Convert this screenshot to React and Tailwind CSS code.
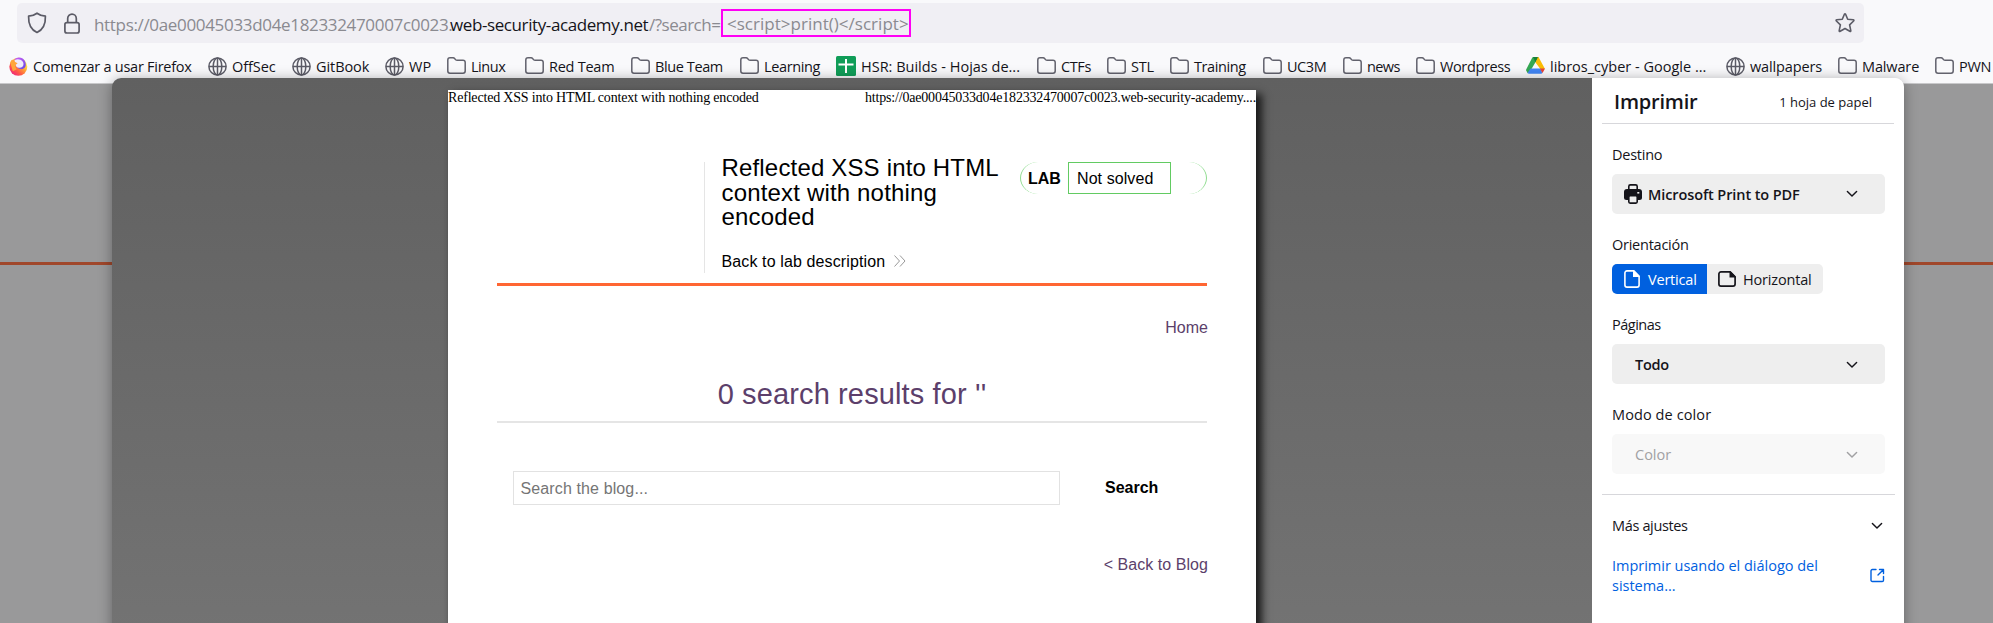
function Shield() {
  return (
    <svg width="20" height="22" viewBox="0 0 20 22" fill="none" stroke="#5b5b66" strokeWidth="1.7" strokeLinejoin="round">
      <path d="M10 1.2C7.6 3 4.6 4 1.6 4.2 1.3 11.500 3.200 17.200 10 20.500c6.800-3.300 8.700-9 8.400-16.300C15.400 4 12.400 3 10 1.200z" />
    </svg>
  );
}

function Lock() {
  return (
    <svg width="16" height="21" viewBox="0 0 16 21" fill="none" stroke="#5b5b66" strokeWidth="1.7">
      <rect x="0.9" y="9.6" width="14.2" height="10.400" rx="2" />
      <path d="M3.700 9.500V5.400a4.300 4.300 0 0 1 8.600 0v4.100" />
    </svg>
  );
}

function Star() {
  return (
    <svg width="20" height="20" viewBox="0 0 20 20" fill="none" stroke="#5b5b66" strokeWidth="1.6" strokeLinejoin="round">
      <path d="M9.400 1.300Q10 .5 10.600 1.300L12.700 6.300l5.500.5q1.200.2.4 1.200l-4 3.900 1.200 5.700q.1 1.200-1 .7L10 15.500l-4.800 2.800q-1.100.5-1-.7l1.200-5.700-4-3.900q-.8-1 .4-1.200l5.500-.5z" />
    </svg>
  );
}

function Folder() {
  return (
    <svg className="-mt-0.5" width="19" height="17" viewBox="0 0 19 17" fill="none" stroke="#62626d" strokeWidth="1.5" strokeLinejoin="round">
      <path d="M.8 3A2.200 2.200 0 0 1 3 .8h3.100c.7 0 1.100.2 1.500.7l1.100 1.200c.4.4.8.600 1.400.6H16a2.200 2.200 0 0 1 2.200 2.200V14A2.200 2.200 0 0 1 16 16.200H3A2.200 2.200 0 0 1 .8 14z" />
    </svg>
  );
}

function Globe() {
  return (
    <svg width="19" height="19" viewBox="0 0 19 19" fill="none" stroke="#5b5b66" strokeWidth="1.5">
      <circle cx="9.500" cy="9.500" r="8.600" />
      <ellipse cx="9.500" cy="9.500" rx="4.300" ry="8.600" />
      <path d="M9.500 1v17M1 9.500h17" />
    </svg>
  );
}

function Sheet() {
  return (
    <svg width="20" height="20" viewBox="0 0 20 20">
      <rect width="20" height="20" rx="1.500" fill="#109d58" />
      <path d="M10 3v14M2.500 8.500h15" stroke="#fff" strokeWidth="2" />
    </svg>
  );
}

function Drive() {
  return (
    <svg className="-mt-0.5" width="19" height="17" viewBox="0 0 19 17">
      <path d="M6.300.6Q6.700 0 7.400 0h1.900v5.500L4.600 13.600 1.700 16.300.3 13.800q-.5-.8 0-1.600z" fill="#34a853" />
      <path d="M7 0h4.600q.7 0 1.100.6L9.500 5.600z" fill="#188038" />
      <path d="M12 0q.6.1.9.8l5.600 10.200q.4.600.2 1h-4.300L9.500 5.600z" fill="#fbbc04" />
      <path d="M4.600 11.500h9.800L16.500 16q-.6.8-1.500.8H3q-1 0-1.500-.8z" fill="#4285f4" />
      <path d="M13.800 11.500h5q-.1.800-.4 1.300l-1.900 3.300z" fill="#ea4335" />
    </svg>
  );
}

function Firefox() {
  return (
    <svg width="19" height="19" viewBox="0 0 19 19">
      <defs>
        <linearGradient id="fire" x1="0.850" y1="0.100" x2="0.150" y2="0.900">
          <stop offset="0.100" stopColor="#fff44f" />
          <stop offset="0.400" stopColor="#ffa436" />
          <stop offset="0.700" stopColor="#ff5a45" />
          <stop offset="1" stopColor="#f0267c" />
        </linearGradient>
        <linearGradient id="globe" x1="0.200" y1="0" x2="0.800" y2="1">
          <stop offset="0" stopColor="#c35bf5" />
          <stop offset="1" stopColor="#6a4be8" />
        </linearGradient>
      </defs>
      <circle cx="9.300" cy="9.800" r="9" fill="url(#fire)" />
      <path d="M5.500 2.200Q7.500.3 10.500.6c4 .4 6.500 3.600 6.300 7.400-.2 2.800-2.500 4.400-4.800 4.100-3-.3-4.500-1.600-4.300-3.800z" fill="url(#globe)" />
      <path d="M5.500 3.200Q8.500 1.600 11.500 2.800c2.300 1 3.400 3 2.900 5.200-.5 1.900-2.200 2.900-3.900 2.700C8 10.900 6.700 9.400 6.600 7.500z" fill="#efeafc" />
      <path d="M1.200 5.200Q2 3.600 3.300 2.600q.2 1.500 1.700 2.200Q7 5 8.600 6.600L6.300 8q-.8 2.600 1.500 4.200l-4 2z" fill="#ffa63a" />
    </svg>
  );
}

function Chevron({ className }) {
  return (
    <svg className={className} width="12" height="8" viewBox="0 0 12 8" fill="none" stroke="currentColor" strokeWidth="1.450" strokeLinecap="round" strokeLinejoin="round">
      <path d="M1.400 1.400 6 6l4.600-4.600" />
    </svg>
  );
}

const icons = { folder: Folder, globe: Globe, sheet: Sheet, drive: Drive, firefox: Firefox };

const bookmarks = [
  { icon: "firefox", label: "Comenzar a usar Firefox", box: "w-[199px]", track: "tracking-[-0.26px]" },
  { icon: "globe", label: "OffSec", box: "w-[84px]", track: "tracking-[-0.06px]" },
  { icon: "globe", label: "GitBook", box: "w-[93px]", track: "tracking-[-0.07px]" },
  { icon: "globe", label: "WP", box: "w-[62px]", track: "tracking-normal" },
  { icon: "folder", label: "Linux", box: "w-[78px]", track: "tracking-[-0.45px]" },
  { icon: "folder", label: "Red Team", box: "w-[106px]", track: "tracking-[-0.25px]" },
  { icon: "folder", label: "Blue Team", box: "w-[109px]", track: "tracking-[-0.4px]" },
  { icon: "folder", label: "Learning", box: "w-[96px]", track: "tracking-[-0.36px]" },
  { icon: "sheet", label: "HSR: Builds - Hojas de...", box: "w-[201px]", track: "tracking-normal" },
  { icon: "folder", label: "CTFs", box: "w-[70px]", track: "tracking-[-0.4px]" },
  { icon: "folder", label: "STL", box: "w-[63px]", track: "tracking-[-0.2px]" },
  { icon: "folder", label: "Training", box: "w-[93px]", track: "tracking-[-0.4px]" },
  { icon: "folder", label: "UC3M", box: "w-[80px]", track: "tracking-[-0.45px]" },
  { icon: "folder", label: "news", box: "w-[73px]", track: "tracking-[-0.6px]" },
  { icon: "folder", label: "Wordpress", box: "w-[110px]", track: "tracking-[-0.38px]" },
  { icon: "drive", label: "libros_cyber - Google ...", box: "w-[200px]", track: "tracking-normal" },
  { icon: "globe", label: "wallpapers", box: "w-[112px]", track: "tracking-[-0.14px]" },
  { icon: "folder", label: "Malware", box: "w-[97px]", track: "tracking-[-0.14px]" },
  { icon: "folder", label: "PWN", box: "w-[58px]", track: "tracking-[-0.3px]" },
];

function Toolbar() {
  return (
    <header className="h-[83px] shrink-0 bg-[#f9f9fb] pt-[3px]">
      <div className="ml-[17px] flex h-10 w-[1847px] items-center rounded-[5px] bg-[#f0eff4] pl-[10px] pr-[9px]">
        <Shield />
        <div className="ml-[17px] w-[30px]">
          <Lock />
        </div>
        <div className="flex items-center whitespace-pre text-[17px] leading-[24px] text-[#8a8a90]">
          <span className="w-[356px] pt-[3px] tracking-[-0.33px]">https://0ae00045033d04e182332470007c0023.</span>
          <span className="w-[199px] pt-[3px] tracking-[-0.4px] text-[#15141a]">web-security-academy.net</span>
          <span className="w-[72px] pt-[3px] tracking-[-0.5px]">/?search=</span>
          <span className="h-7 w-[190px] border-2 border-[#ff00f5] pl-1 pt-px tracking-[0.02px]">
            {"<script>print()</script>"}
          </span>
        </div>
        <div className="ml-auto">
          <Star />
        </div>
      </div>
      <nav className="flex h-10 items-center overflow-hidden pl-[9px] pt-[6px] text-[14.5px] text-[#15141a]">
        {bookmarks.map((b) => {
          const Icon = icons[b.icon];
          return (
            <a key={b.label} className={"flex shrink-0 items-center gap-[5px] whitespace-nowrap " + b.box}>
              <Icon />
              <span className={"pt-0.5 " + b.track}>{b.label}</span>
            </a>
          );
        })}
      </nav>
    </header>
  );
}

function Paper() {
  return (
    <article className="ml-[336px] mt-3 h-[560px] w-[808px] bg-white font-['Liberation_Sans',Arial,sans-serif] text-[16px] text-black shadow-[5px_5px_8px_1px_#1a1a1a]">
      <div className="flex h-[72px] justify-between whitespace-nowrap font-['Liberation_Serif',serif] text-[14px] leading-[16px] tracking-[-0.185px]">
        <span>Reflected XSS into HTML context with nothing encoded</span>
        <span>https://0ae00045033d04e182332470007c0023.web-security-academy....</span>
      </div>
      <div className="mx-[49px] flex h-[124px] border-b-[3px] border-[#ff6633]">
        <div className="ml-[207px] h-[111px] w-[300px] border-l border-[#e5e5e5] pl-[16.500px]">
          <h2 className="-mt-[6px] h-[88px] whitespace-nowrap text-[24px] leading-[24.5px] tracking-[0.17px]">
            Reflected XSS into HTML
            <br />
            context with nothing
            <br />
            encoded
          </h2>
          <a className="mt-[9px] flex items-center whitespace-nowrap leading-[18px] tracking-[0.12px]">
            Back to lab description
            <svg className="-mt-0.5 ml-[9px]" width="12" height="12" viewBox="0 0 12 12" fill="none" stroke="#999" strokeWidth="1">
              <path d="M.5.500 5.500 6 .5 11.500M6 .500 11 6 6 11.500" />
            </svg>
          </a>
        </div>
        <div className="ml-4 flex h-8 w-[187px] items-center rounded-[18px/16px] border-x border-[#8fdc8f]">
          <b className="w-[47px] pl-[7px] pt-px">LAB</b>
          <p className="h-8 w-[103px] border border-[#62cb62] pl-2 leading-[32px] tracking-[0.08px]">Not solved</p>
        </div>
      </div>
      <div className="-mr-px ml-[49px] flex h-[83px] justify-end pr-[49px] pt-[33px] leading-[18px] text-[#5c3f6b]">
        <a>Home</a>
      </div>
      <h1 className="mx-[49px] h-[54px] border-b-2 border-[#e5e5e5] pt-px text-center text-[29px] leading-[48px] tracking-[0.13px] text-[#5c3f6b]">
        0 search results for ''
      </h1>
      <div className="mt-12 flex h-[34px] items-center pl-[65px]">
        <div className="h-[34px] w-[547px] border border-[#e2e2e2] pl-[6.500px] leading-[33px] tracking-[0.12px] text-[#757575]">
          Search the blog...
        </div>
        <b className="ml-[45px]">Search</b>
      </div>
      <div className="mr-[48px] mt-[51px] flex justify-end leading-[18px] tracking-[0.05px] text-[#5c3f6b]">
        <a>&lt; Back to Blog</a>
      </div>
    </article>
  );
}

function PrintSettings() {
  return (
    <aside className="w-[312px] rounded-tr-[9px] bg-white text-[14.5px] leading-[20px] text-[#15141a]">
      <div className="mx-[10px] flex h-[46px] items-center justify-between border-b border-[#d7d7db] pl-3 pr-[22px] pt-[3px]">
        <h2 className="text-[20px] font-semibold tracking-[-0.2px]">Imprimir</h2>
        <span className="text-[13px]">1 hoja de papel</span>
      </div>
      <div className="pl-5 pr-[19px]">
        <p className="mt-[21px] tracking-[-0.24px]">Destino</p>
        <div className="mt-[9px] flex h-10 items-center rounded-[5px] bg-[#eeeeee] pl-3 pr-[27px]">
          <svg width="18" height="20" viewBox="0 0 18 20">
            <path d="M4.800 5V2.500A1.600 1.600 0 0 1 6.400.9h5.200a1.600 1.600 0 0 1 1.600 1.600V5" fill="none" stroke="#15141a" strokeWidth="1.600" />
            <path d="M3 5h12a3 3 0 0 1 3 3v5.500a2.500 2.500 0 0 1-2.500 2.500h-13A2.500 2.500 0 0 1 0 13.500V8a3 3 0 0 1 3-3z" fill="#15141a" />
            <rect x="4.800" y="11.600" width="8.400" height="7.500" rx="1.300" fill="#eee" stroke="#15141a" strokeWidth="1.600" />
            <rect x="13.300" y="8" width="2" height="1.600" fill="#eee" />
          </svg>
          <span className="ml-[6px] pt-px font-semibold tracking-[-0.1px]">Microsoft Print to PDF</span>
          <Chevron className="ml-auto" />
        </div>
        <p className="mt-[21px] tracking-[-0.25px]">Orientación</p>
        <div className="mt-[9px] flex h-[30px] w-[211px] overflow-hidden rounded-[5px] bg-[#eeeeee]">
          <div className="flex w-[95px] items-center bg-[#0060df] pl-3 tracking-[-0.2px] text-white">
            <svg width="16" height="18" viewBox="0 0 16 18">
              <path d="M9.800.9H3A2.100 2.100 0 0 0 .9 3v12A2.100 2.100 0 0 0 3 17.100h10a2.100 2.100 0 0 0 2.100-2.100V6.200z" fill="none" stroke="#fff" strokeWidth="1.600" strokeLinejoin="round" />
              <path d="M9 .5h1.200L15.500 5.800V7H9z" fill="#fff" />
            </svg>
            <span className="ml-2 pt-px">Vertical</span>
          </div>
          <div className="flex items-center pl-[11px] tracking-[-0.17px]">
            <svg width="18" height="16" viewBox="0 0 18 16">
              <path d="M12.200.9H3A2.100 2.100 0 0 0 .9 3v10A2.100 2.100 0 0 0 3 15.100h12a2.100 2.100 0 0 0 2.100-2.100V5.800z" fill="none" stroke="#15141a" strokeWidth="1.700" strokeLinejoin="round" />
              <path d="M11.500.5h1.200l4.800 4.800v1.200h-6z" fill="#15141a" />
            </svg>
            <span className="ml-[7px] pt-px">Horizontal</span>
          </div>
        </div>
        <p className="mt-[21px] tracking-[-0.5px]">Páginas</p>
        <div className="mt-[9px] flex h-10 items-center justify-between rounded-[5px] bg-[#eeeeee] pl-[23px] pr-[27px]">
          <span className="pt-px font-semibold tracking-[-0.25px]">Todo</span>
          <Chevron className="mt-0.5" />
        </div>
        <p className="mt-[21px] tracking-[0.1px]">Modo de color</p>
        <div className="mt-[9px] flex h-10 items-center justify-between rounded-[5px] bg-[#f8f8f8] pl-[23px] pr-[27px] text-[#a1a1a3]">
          <span className="pt-px font-medium">Color</span>
          <Chevron className="mt-0.5" />
        </div>
      </div>
      <div className="ml-[10px] mr-[9px] mt-5 border-t border-[#d7d7db] pl-[10px] pr-3">
        <div className="mt-[21px] flex items-center justify-between tracking-[-0.35px]">
          Más ajustes
          <Chevron />
        </div>
        <a className="mt-5 flex items-center justify-between text-[#0060df]">
          <span className="whitespace-nowrap tracking-[-0.02px]">
            Imprimir usando el diálogo del
            <br />
            sistema...
          </span>
          <svg className="-mr-0.5 -mt-0.5" width="15" height="15" viewBox="0 0 15 15" fill="none" stroke="#0060df" strokeWidth="1.400" strokeLinecap="round" strokeLinejoin="round">
            <path d="M6 1.500H2.300A1.300 1.300 0 0 0 1 2.800v9.400A1.300 1.300 0 0 0 2.300 13.500h9.900a1.300 1.300 0 0 0 1.300-1.300V8.500M8 7 13.300 1.700M9.500 1.500h4v4" />
          </svg>
        </a>
      </div>
    </aside>
  );
}

export default function App() {
  return (
    <div className="relative flex h-[623px] w-[1993px] flex-col overflow-hidden font-['Open_Sans','Noto_Sans',sans-serif]">
      <Toolbar />
      <main className="flex-1 border-t border-[#c8c8ca] bg-[#99999a] pt-[178px]">
        <div className="h-[3px] bg-[#a0472b]" />
      </main>
      <section className="absolute left-[112px] top-[78px] flex h-[560px] w-[1792px] rounded-t-[9px] shadow-[0_2px_14px_rgba(0,0,0,0.35)]">
        <div className="w-[1480px] overflow-hidden rounded-tl-[9px] bg-linear-to-b from-[#606060] to-[#737373]">
          <Paper />
        </div>
        <PrintSettings />
      </section>
    </div>
  );
}
